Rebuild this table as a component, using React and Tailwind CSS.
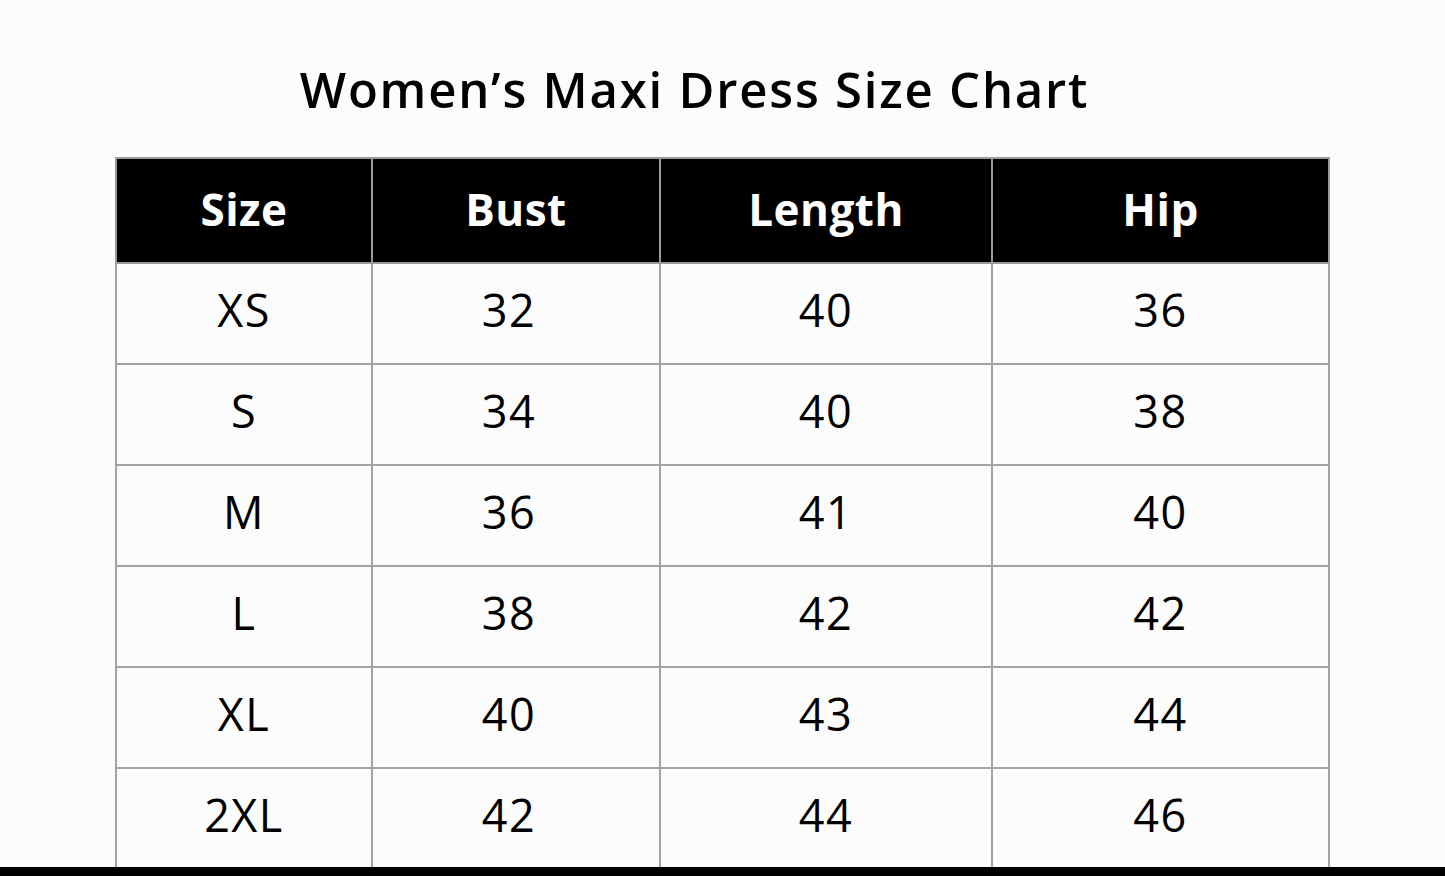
import React from "react";

const rows = [
  ["XS", "32", "40", "36"],
  ["S", "34", "40", "38"],
  ["M", "36", "41", "40"],
  ["L", "38", "42", "42"],
  ["XL", "40", "43", "44"],
  ["2XL", "42", "44", "46"],
];

const cols = ["Size", "Bust", "Length", "Hip"];
const widths = ["w-[256px]", "w-[288px]", "w-[332px]", "w-[337px]"];

export default function App() {
  return (
    <div
      className="h-[876px] w-full overflow-hidden flex flex-col bg-[#fdfcfd]"
      style={{ fontFamily: '"Open Sans", "Noto Sans", sans-serif' }}
    >
      <div className="flex-1 overflow-hidden">
        {/* Title */}
        <div className="flex justify-center pr-[56px] pt-[53px]">
          <h1 className="text-[49px] leading-[72px] font-semibold text-black tracking-[1.8px]">
            Women’s Maxi Dress Size Chart
          </h1>
        </div>

        {/* Table */}
        <div className="mt-[32px] ml-[115px]">
          <table className="border-collapse table-fixed w-[1214px] border-2 border-[#9a9a9a]">
            <thead>
              <tr className="bg-black h-[105px]">
                {cols.map((c, i) => (
                  <th
                    key={c}
                    className={`${widths[i]} border-2 border-[#9a9a9a] pb-[4px] text-white text-[44px] font-bold text-center tracking-[0.5px]`}
                  >
                    {c}
                  </th>
                ))}
              </tr>
            </thead>
            <tbody>
              {rows.map((r) => (
                <tr key={r[0]} className="h-[101px]">
                  {r.map((v, i) => (
                    <td
                      key={i}
                      className={`border-2 border-[#a3a3a3] pb-[8px] text-center text-[45px] text-black font-normal tracking-[1.5px] ${
                        i === 1 ? "pr-[14px]" : ""
                      }`}
                    >
                      {v}
                    </td>
                  ))}
                </tr>
              ))}
            </tbody>
          </table>
        </div>
      </div>

      {/* bottom bar */}
      <div className="h-[9px] bg-black shrink-0" />
    </div>
  );
}
